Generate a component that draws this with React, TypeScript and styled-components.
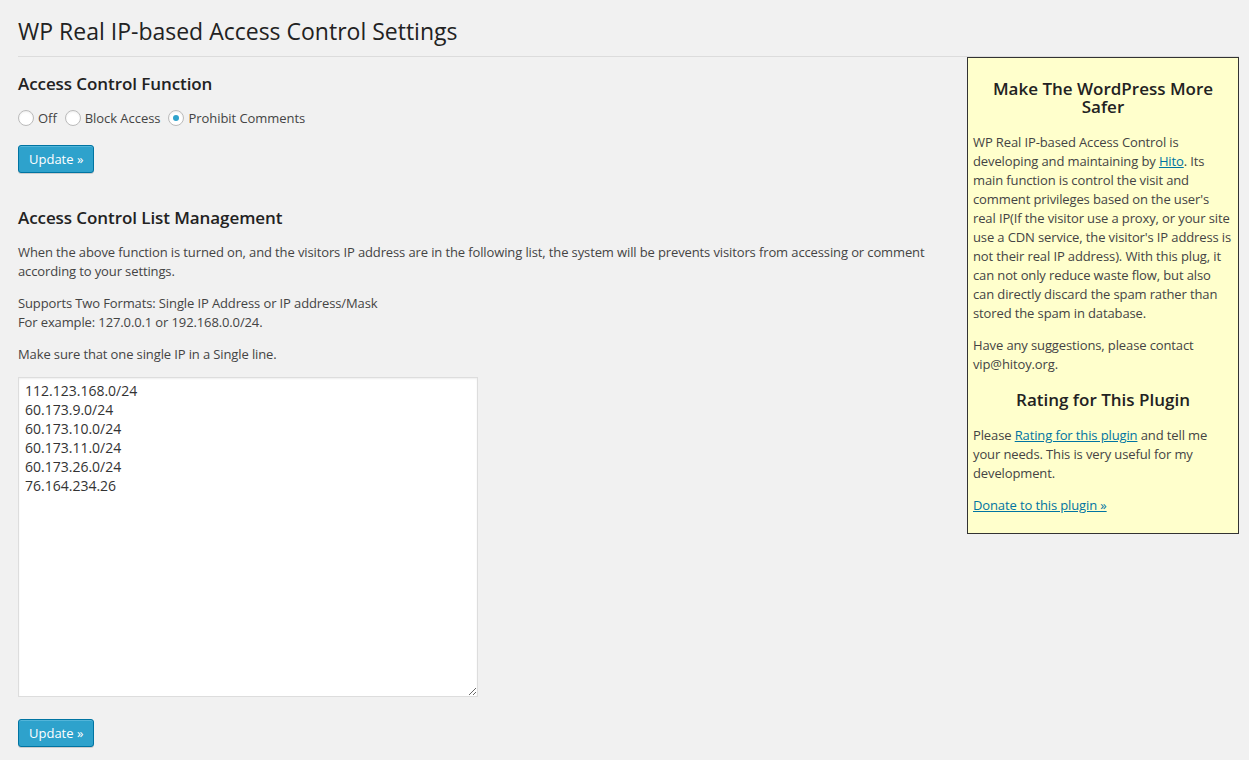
import React from "react";
import styled, { createGlobalStyle } from "styled-components";

const Global = createGlobalStyle`
  html, body { margin: 0; padding: 0; background: #f1f1f1; }
  body {
    font-family: "Open Sans", "Liberation Sans", sans-serif;
    font-size: 13px;
    color: #444;
    line-height: 19px;
  }
  * { box-sizing: border-box; }
`;

const Page = styled.div`
  padding: 0 10px 0 18px;
  min-height: 760px;
`;

const Title = styled.h2`
  margin: 0;
  padding: 17px 0 10px;
  font-size: 23px;
  font-weight: 400;
  line-height: 29px;
  color: #222;
  border-bottom: 1px solid #dcdcdc;
`;

const Body = styled.div`
  display: flex;
  align-items: flex-start;
  gap: 20px;
`;

const Main = styled.div`
  flex: 1;
  min-width: 0;
`;

const SectionTitle = styled.h3<{ $top: number }>`
  margin: ${(p) => p.$top}px 0 0;
  font-size: 17px;
  font-weight: 600;
  line-height: 22px;
  letter-spacing: -0.08px;
  color: #222;
`;

const RadioRow = styled.div`
  display: flex;
  align-items: center;
  margin-top: 13px;
  height: 20px;
  letter-spacing: -0.05px;
`;

const RadioLabel = styled.label`
  display: inline-flex;
  align-items: center;
  margin-right: 8px;
  cursor: pointer;
`;

const Radio = styled.input.attrs({ type: "radio" })`
  appearance: none;
  -webkit-appearance: none;
  width: 16px;
  height: 16px;
  margin: 0 4px 0 0;
  border: 1px solid #bbb;
  border-radius: 50%;
  background: #fff;
  box-shadow: inset 0 1px 2px rgba(0, 0, 0, 0.07);
  display: inline-flex;
  align-items: center;
  justify-content: center;
  &:checked::before {
    content: "";
    width: 6px;
    height: 6px;
    border-radius: 50%;
    background: #2ea2cc;
  }
`;

const Button = styled.button<{ $top: number }>`
  display: block;
  margin-top: ${(p) => p.$top}px;
  height: 28px;
  padding: 0 10px 1px;
  font-family: inherit;
  font-size: 13px;
  line-height: 26px;
  color: #fff;
  background: #2ea2cc;
  border: 1px solid #0074a2;
  border-radius: 3px;
  box-shadow: inset 0 1px 0 rgba(120, 200, 230, 0.5), 0 1px 0 rgba(0, 0, 0, 0.15);
  cursor: pointer;
`;

const Para = styled.p<{ $top: number }>`
  margin: ${(p) => p.$top}px 0 0;
  line-height: 19px;
  letter-spacing: -0.12px;
`;

const IpList = styled.textarea`
  display: block;
  margin-top: 13px;
  width: 460px;
  height: 320px;
  padding: 3px 6px;
  font-family: "Open Sans", "Liberation Sans", sans-serif;
  font-size: 14px;
  line-height: 19px;
  color: #333;
  background: #fff;
  border: 1px solid #ddd;
  box-shadow: inset 0 1px 2px rgba(0, 0, 0, 0.07);
  outline: none;
`;

const Sidebar = styled.aside`
  flex: 0 0 272px;
  width: 272px;
  padding: 22px 5px 18px;
  background: #ffffcc;
  border: 1px solid #333;
`;

const SideTitle = styled.h3<{ $top: number }>`
  margin: ${(p) => p.$top}px 0 0;
  text-align: center;
  font-size: 17px;
  font-weight: 600;
  line-height: 18px;
  color: #222;
`;

const SideText = styled.p<{ $top: number }>`
  margin: ${(p) => p.$top}px 0 0;
  line-height: 19px;
  letter-spacing: -0.12px;
`;

const Link = styled.a`
  color: #0074a2;
  text-decoration: underline;
`;

const ips = [
  "112.123.168.0/24",
  "60.173.9.0/24",
  "60.173.10.0/24",
  "60.173.11.0/24",
  "60.173.26.0/24",
  "76.164.234.26",
].join("\n");

export default function App() {
  return (
    <Page>
      <Global />
      <Title>WP Real IP-based Access Control Settings</Title>
      <Body>
        <Main>
          <SectionTitle $top={16}>Access Control Function</SectionTitle>
          <RadioRow>
            <RadioLabel>
              <Radio name="acf" />
              Off
            </RadioLabel>
            <RadioLabel>
              <Radio name="acf" />
              Block Access
            </RadioLabel>
            <RadioLabel>
              <Radio name="acf" defaultChecked />
              Prohibit Comments
            </RadioLabel>
          </RadioRow>
          <Button $top={17}>Update »</Button>
          <SectionTitle $top={34}>Access Control List Management</SectionTitle>
          <Para $top={14}>
            When the above function is turned on, and the visitors IP address are in the following
            list, the system will be prevents visitors from accessing or comment according to your
            settings.
          </Para>
          <Para $top={13}>
            Supports Two Formats: Single IP Address or IP address/Mask
            <br />
            For example: 127.0.0.1 or 192.168.0.0/24.
          </Para>
          <Para $top={13}>Make sure that one single IP in a Single line.</Para>
          <IpList defaultValue={ips} spellCheck={false} />
          <Button $top={22}>Update »</Button>
        </Main>
        <Sidebar>
          <SideTitle $top={0}>Make The WordPress More Safer</SideTitle>
          <SideText $top={17}>
            WP Real IP-based Access Control is developing and maintaining by{" "}
            <Link href="#">Hito</Link>. Its main function is control the visit and comment
            privileges based on the user's real IP(If the visitor use a proxy, or your site use a
            CDN service, the visitor's IP address is not their real IP address). With this plug, it
            can not only reduce waste flow, but also can directly discard the spam rather than
            stored the spam in database.
          </SideText>
          <SideText $top={13}>Have any suggestions, please contact vip@hitoy.org.</SideText>
          <SideTitle $top={17}>Rating for This Plugin</SideTitle>
          <SideText $top={17}>
            Please <Link href="#">Rating for this plugin</Link> and tell me your needs. This is very
            useful for my development.
          </SideText>
          <SideText $top={13}>
            <Link href="#">Donate to this plugin »</Link>
          </SideText>
        </Sidebar>
      </Body>
    </Page>
  );
}
